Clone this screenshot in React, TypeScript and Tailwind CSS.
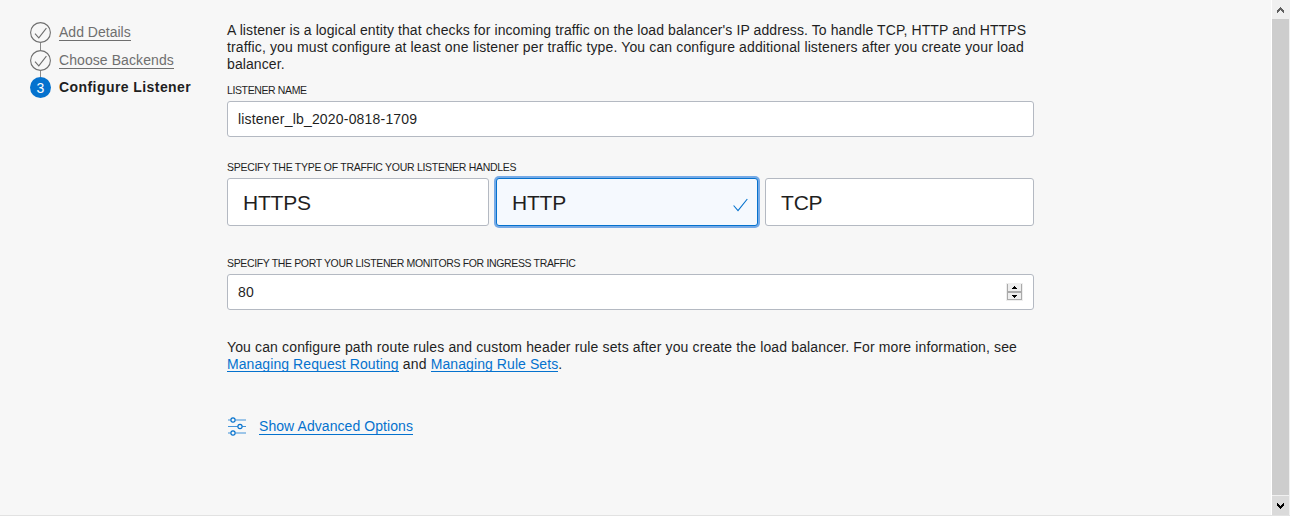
import React from 'react';

function StepCheck() {
  return (
    <svg width="21" height="21" viewBox="0 0 21 21" fill="none" stroke="#6f6f6f" className="shrink-0">
      <circle cx="10.5" cy="10.5" r="9.9" strokeWidth="1.1" />
      <path d="M5 11.6 8.8 15.8 16.4 6.2" strokeWidth="1.1" />
    </svg>
  );
}

function Steps() {
  return (
    <nav className="flex w-[197px] shrink-0 flex-col pt-[22px]">
      <div className="flex h-[21px] items-center">
        <StepCheck />
        <a className="ml-2 h-[17px] border-b border-[#6f6f6f] leading-[17px] tracking-[0.01px] text-[#6f6f6f]">Add Details</a>
      </div>
      <div className="ml-[10px] h-[7px] w-px bg-[#8a8a8a]" />
      <div className="flex h-[21px] items-center">
        <StepCheck />
        <a className="ml-2 h-[17px] border-b border-[#6f6f6f] leading-[17px] tracking-[0.08px] text-[#6f6f6f]">Choose Backends</a>
      </div>
      <div className="ml-[10px] h-[6px] w-px bg-[#8a8a8a]" />
      <div className="flex h-[21px] items-center">
        <span className="flex size-[21px] items-center justify-center rounded-full bg-[#0572ce] pt-px leading-[20px] text-white">3</span>
        <span className="ml-2 font-bold tracking-[0.43px]">Configure Listener</span>
      </div>
    </nav>
  );
}

function Label({ children }: { children: React.ReactNode }) {
  return <div className="h-[13px] whitespace-nowrap text-[10.5px] leading-[13px]">{children}</div>;
}

function Link({ children }: { children: React.ReactNode }) {
  return <a className="inline-block h-4 border-b border-[#0572ce] leading-[17px] tracking-[0.08px] text-[#0572ce]">{children}</a>;
}

function Scrollbar() {
  return (
    <div className="flex w-[19px] shrink-0 flex-col border-x border-l-white border-r-[#f0f0f0] bg-[#f0f0f0]">
      <div className="flex h-[19px] items-center justify-center">
        <svg width="7" height="6" viewBox="0 0 7 6" fill="#606060" shapeRendering="crispEdges">
          <path d="M3 0h1v1h1v1h1v1h1v3h-1v-1h-1v-1h-1v-1h-1v1h-1v1h-1v1h-1v-3h1v-1h1v-1h1z" />
        </svg>
      </div>
      <div className="flex-1 bg-[#cdcdcd]" />
      <div className="mt-px flex h-[19px] items-center justify-center bg-[#dadada]">
        <svg width="7" height="6" viewBox="0 0 7 6" fill="#000" shapeRendering="crispEdges">
          <path d="M3 6h1v-1h1v-1h1v-1h1v-3h-1v1h-1v1h-1v1h-1v-1h-1v-1h-1v-1h-1v3h1v1h1v1h1z" />
        </svg>
      </div>
    </div>
  );
}

export default function App() {
  return (
    <div className="flex h-[516px] w-[1290px] overflow-hidden border-b border-[#e2e2e2] bg-[#f7f7f7] font-['Liberation_Sans',Arial,sans-serif] text-[14px] leading-[17px] text-[#1f1f1f]">
      <div className="flex flex-1 pl-[30px]">
        <Steps />
        <main className="flex w-[807px] flex-col pt-[22px]">
          <p className="whitespace-nowrap tracking-[0.094px]">
            A listener is a logical entity that checks for incoming traffic on the load balancer's IP address. To handle TCP, HTTP and HTTPS<br />
            <span className="tracking-[0.133px]">traffic, you must configure at least one listener per traffic type. You can configure additional listeners after you create your load</span><br />
            balancer.
          </p>
          <div className="mt-[11px] tracking-[-0.38px]"><Label>LISTENER NAME</Label></div>
          <div className="mt-[4px] flex h-9 items-center rounded-[3px] border border-[#b4b9c2] bg-white px-[10px] tracking-[0.19px]">listener_lb_2020-0818-1709</div>

          <div className="mt-[24px] tracking-[-0.28px]"><Label>SPECIFY THE TYPE OF TRAFFIC YOUR LISTENER HANDLES</Label></div>
          <div className="mt-[4px] flex h-12 text-[21px] tracking-[-0.2px]">
            <div className="flex w-[262px] items-center rounded-[3px] border border-[#b4b9c2] bg-white pl-[15px]">HTTPS</div>
            <div className="ml-[7px] flex w-[262px] items-center justify-between rounded-[3px] border border-[#0572ce] bg-[#f5f9fe] pl-[15px] pr-[9px] shadow-[0_0_0_2px_#76aae6]">
              HTTP
              <svg width="15" height="14" viewBox="0 0 15 14" fill="none" stroke="#0572ce" strokeWidth="1.1" className="mt-1.5">
                <path d="M.6 7.5 5 12.7 14.3 1" />
              </svg>
            </div>
            <div className="ml-[7px] flex flex-1 items-center rounded-[3px] border border-[#b4b9c2] bg-white pl-[15px]">TCP</div>
          </div>

          <div className="mt-[31px] tracking-[-0.35px]"><Label>SPECIFY THE PORT YOUR LISTENER MONITORS FOR INGRESS TRAFFIC</Label></div>
          <div className="mt-[4px] flex h-9 items-center justify-between rounded-[3px] border border-[#b4b9c2] bg-white pl-[10px] pr-[10px] tracking-[0.19px]">
            80
            <svg width="17" height="18" viewBox="0 0 17 18" shapeRendering="crispEdges">
              <path fill="#eeeeee" d="M0 0h17v18H0z" />
              <path fill="#aaaaaa" d="M1 1h1v16H1zM15 1h1v16h-1zM1 8h15v2H1zM1 16h15v1H1z" />
              <path fill="#000" d="M8 3h1v1h1v1h1v1H6V5h1V4h1zM6 12h5v1h-1v1H9v1H8v-1H7v-1H6z" />
            </svg>
          </div>

          <p className="mt-[29px] whitespace-nowrap">
            <span className="tracking-[0.137px]">You can configure path route rules and custom header rule sets after you create the load balancer. For more information, see</span><br />
            <Link>Managing Request Routing</Link><span className="tracking-[0.2px]"> and </span><Link>Managing Rule Sets</Link>.
          </p>
          <div className="mt-[44px] flex h-[18px] items-center">
            <svg width="19" height="19" viewBox="0 0 19 19" fill="none" stroke="#0572ce" strokeWidth="1.15" className="mt-px shrink-0">
              <path d="M1 3h2.8M8.2 3H19M1 9.5h9.8M15.2 9.5H19M1 16h2.8M8.2 16H19" stroke="#4394da" />
              <circle cx="6" cy="3" r="2.1" />
              <circle cx="13" cy="9.5" r="2.1" />
              <circle cx="6" cy="16" r="2.1" />
            </svg>
            <a className="ml-[13px] h-[17px] border-b border-[#0572ce] tracking-[0.07px] text-[#0572ce]">Show Advanced Options</a>
          </div>
        </main>
      </div>
      <Scrollbar />
    </div>
  );
}
